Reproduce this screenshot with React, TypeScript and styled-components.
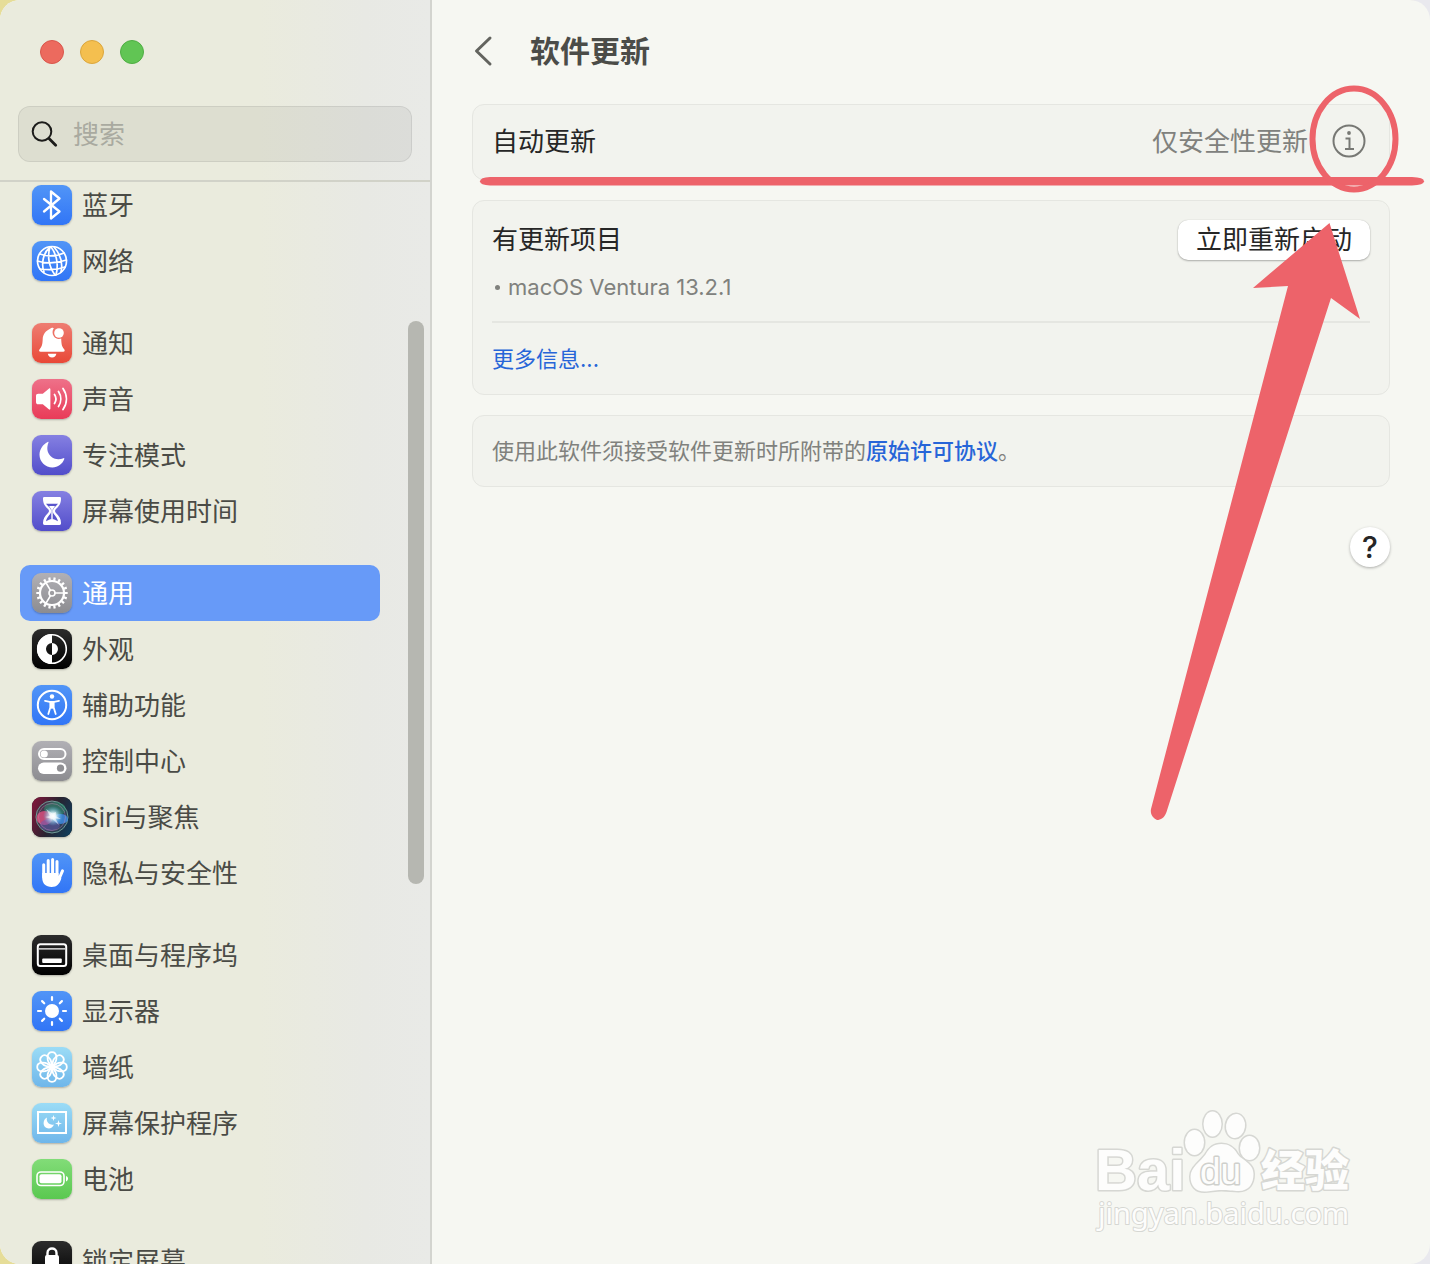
import React from "react";
import styled, { createGlobalStyle } from "styled-components";

const GlobalStyle = createGlobalStyle`
  *, *::before, *::after { box-sizing: border-box; }
  body {
    margin: 0;
    background: linear-gradient(90deg, #e6dd98 0%, #d2cc8d 97%, #e9e9ee 99%);
    color: #262626;
    font-family: Inter, "Noto Sans CJK SC", sans-serif;
    font-size: 26px;
    line-height: 40px;
  }
  button, input { font: inherit; color: inherit; }
  h1, h2, p, ul { margin: 0; padding: 0; font-weight: 400; }
  ul { list-style: none; }
`;

const Window = styled.div`
  position: relative;
  display: flex;
  height: 100vh;
  overflow: hidden;
  border-radius: 20px;
  background: #f6f7f2;
`;

const Sidebar = styled.aside`
  position: relative;
  flex: none;
  display: flex;
  flex-direction: column;
  width: 432px;
  border-right: 2px solid #d3d4cf;
  background: linear-gradient(90deg, #eaebdd 0%, #eaebdd 60%, #e8e9e4 85%, #e9eae7 100%);
`;

const SidebarHeader = styled.header`
  flex: none;
  display: flex;
  flex-direction: column;
  gap: 42px;
  padding: 40px 18px 18px;
  border-bottom: 2px solid #d1d2c8;
`;

const TrafficLights = styled.div`
  display: flex;
  gap: 16px;
  padding-left: 22px;
`;

const Light = styled.button<{ $fill: string; $edge: string }>`
  width: 24px;
  height: 24px;
  padding: 0;
  border: 1px solid ${(p) => p.$edge};
  border-radius: 50%;
  background: ${(p) => p.$fill};
`;

const SearchField = styled.label`
  display: flex;
  align-items: center;
  gap: 14px;
  height: 56px;
  padding: 0 12px;
  border: 1px solid rgba(0, 0, 0, 0.07);
  border-radius: 12px;
  background: rgba(0, 0, 0, 0.055);
`;

const SearchInput = styled.input`
  flex: 1;
  min-width: 0;
  padding: 2px 0 0;
  border: 0;
  outline: 0;
  background: transparent;
  &::placeholder { color: #a9aaa0; opacity: 1; }
`;

const SidebarList = styled.nav`
  flex: 1;
  min-height: 0;
  overflow: hidden;
  display: flex;
  flex-direction: column;
  gap: 26px;
  margin-top: -5px;
  padding: 0 50px 0 20px;
`;

const SidebarLink = styled.a<{ $selected: boolean }>`
  display: flex;
  align-items: center;
  gap: 10px;
  height: 56px;
  padding: 0 12px;
  border-radius: 10px;
  color: ${(p) => (p.$selected ? "#ffffff" : "#4a4b46")};
  background: ${(p) => (p.$selected ? "#679af8" : "transparent")};
  text-decoration: none;
  white-space: nowrap;
`;

const SidebarLabel = styled.span`
  padding-top: 2px;
`;

const IconTile = styled.span<{ $from: string; $to: string }>`
  flex: none;
  width: 40px;
  height: 40px;
  border-radius: 9px;
  overflow: hidden;
  background: linear-gradient(${(p) => p.$from}, ${(p) => p.$to});
  box-shadow: 0 1px 2px rgba(0, 0, 0, 0.25);
  svg { display: block; }
`;

const ScrollThumb = styled.div`
  position: absolute;
  top: 321px;
  right: 6px;
  width: 16px;
  height: 563px;
  border-radius: 8px;
  background: #b6b7b1;
`;

const Main = styled.main`
  flex: 1;
  min-width: 0;
  display: flex;
  flex-direction: column;
  gap: 20px;
  padding: 24px 40px 40px;
`;

const TitleBar = styled.header`
  display: flex;
  align-items: center;
  gap: 36px;
  height: 60px;
  padding-bottom: 6px;
  color: #4b4c48;
`;

const BackButton = styled.button`
  display: flex;
  padding: 0;
  border: 0;
  background: none;
`;

const Title = styled.h1`
  font-size: 30px;
  font-weight: 700;
`;

const Card = styled.section`
  padding: 0 19px;
  border: 1px solid #e5e6e1;
  border-radius: 12px;
  background: #f2f3ee;
`;

const CardRow = styled.div<{ $height: number }>`
  display: flex;
  align-items: center;
  justify-content: space-between;
  height: ${(p) => p.$height}px;
`;

const RowTitle = styled.h2`
  font-size: 26px;
`;

const RowValue = styled.div`
  display: flex;
  align-items: center;
  gap: 24px;
  padding-right: 4px;
  color: #80817d;
`;

const InfoButton = styled.button`
  display: flex;
  padding: 0 0 2px;
  border: 0;
  background: none;
`;

const UpdateSummary = styled.div`
  padding: 19px 0;
  border-bottom: 2px solid #e5e6e1;
`;

const RestartButton = styled.button`
  height: 40px;
  padding: 0 18px;
  border: 0;
  border-radius: 10px;
  background: #ffffff;
  line-height: 38px;
  box-shadow: 0 1px 2px rgba(0, 0, 0, 0.28), 0 0 1px rgba(0, 0, 0, 0.2);
`;

const UpdateItem = styled.li`
  display: flex;
  align-items: center;
  gap: 8px;
  padding: 12px 0 0 3px;
  color: #80817d;
  font-size: 22px;
  line-height: 30px;
  &::before {
    content: "";
    width: 5px;
    height: 5px;
    border-radius: 50%;
    background: currentColor;
  }
`;

const SmallText = styled.p`
  color: #80817d;
  font-size: 22px;
`;

const Link = styled.a<{ $medium?: boolean }>`
  color: #2765d8;
  font-size: 22px;
  font-weight: ${(p) => (p.$medium ? 500 : 400)};
  text-decoration: none;
`;

const HelpButton = styled.button`
  align-self: flex-end;
  width: 40px;
  height: 40px;
  margin-top: 20px;
  padding: 0;
  border: 0;
  border-radius: 50%;
  background: #ffffff;
  font-size: 30px;
  font-weight: 500;
  box-shadow: 0 1px 3px rgba(0, 0, 0, 0.3);
`;

const Markup = styled.svg`
  position: absolute;
  top: 0;
  right: 0;
  pointer-events: none;
`;

const Watermark = styled.svg`
  position: absolute;
  right: 70px;
  bottom: 24px;
  pointer-events: none;
`;

const stroke = { fill: "none", stroke: "#fff", strokeLinecap: "round", strokeLinejoin: "round" } as const;
const angles = (n: number) => Array.from({ length: n }, (_, i) => (i * 360) / n);

const art: Record<string, React.ReactNode> = {
  bluetooth: <path {...stroke} strokeWidth="2.300" d="M12 14l15.500 12.500-8.500 7V6.500l8.500 7L12 26.500" />,
  network: (
    <g {...stroke} strokeWidth="1.700">
      <circle cx="20" cy="20" r="14.500" />
      <path d="M18 6C11 12 9 23 12 31M18 6c-3 9-1 20 5 28M22 6c7 8 9 16 7 25M19 6c5 6 8 17 5 28M8 13c8 3 17 2 24-1M5.500 20c9 3 20 2 29-1M8 28c8 1 17 1 25-2" />
    </g>
  ),
  bell: (
    <g fill="#fff">
      <path d="M18.500 5.500c.6-.8 2-.8 3.300-.2-1.600 2.200-1.700 5.400 0 7.900 1.700 2.500 4.700 3.300 7.400 2.300.2 5.500.6 8 2.800 10.500 1.300 1.500.7 2.800-.8 2.800H8.600c-1.500 0-2.100-1.300-.8-2.800 2.200-2.600 2.700-5 2.900-10 .2-4.600 3-8.300 7.800-10.500z" />
      <path d="M15.800 30.800h8.600c-.4 2.300-2 3.800-4.300 3.800s-3.900-1.500-4.300-3.800z" />
      <circle cx="27" cy="10" r="4.800" />
    </g>
  ),
  sound: (
    <>
      <path fill="#fff" d="M4 17c0-1.500.8-2.300 2.300-2.300h4.500l6-5c.9-.7 1.600-.2 1.600.7v19.200c0 .9-.8 1.400-1.600.7l-6-5H6.300C4.800 25.300 4 24.500 4 23z" />
      <path {...stroke} strokeWidth="1.800" d="M22.500 15.500c1.800 2.700 1.800 6.300 0 9M26.500 12.500c3 4.500 3 10.500 0 15M31 9.500c4.500 6.500 4.500 14.500 0 21" />
    </>
  ),
  moon: <path fill="#fff" d="M16.500 7.500c-2 5-1.500 10 2 13.500 3.500 3.500 8.500 4 13 2.200.7-.3 1 .2.800.9C30.500 29 26 32.500 20.500 32.500 13.300 32.500 7.500 26.800 7.500 19.800c0-5.500 3.500-10.500 8.200-12.800.6-.3 1-.1.800.5z" />,
  hourglass: (
    <>
      <path fill="#fff" d="M12.500 6h15c1.300 0 1.500.7 1.500 1.700 0 5-2 7.300-5 10.300-1.300 1.300-1.300 2.700 0 4 3 3 5 5.500 5 10 0 1.300-.5 2-1.500 2h-15c-1 0-1.500-.7-1.500-2 0-4.500 2-7 5-10 1.300-1.300 1.300-2.700 0-4-3-3-5-5.300-5-10.300C11 6.700 11.200 6 12.500 6z" />
      <path fill="#5954cc" d="M14 12.800h12c-1 2-5 4-5.300 7.200.2 3.500 4.300 5.300 5.300 10.300-2-.8-4-2.300-6-2.300s-4 1.500-6 2.300c1-5 5.100-6.800 5.300-10.300-.3-3.200-4.300-5.200-5.300-7.200z" />
      <path fill="#fff" d="M17 15h6l-2.300 3.500V28h-1.400v-9.500z" />
    </>
  ),
  gear: (
    <g {...stroke}>
      <circle cx="20" cy="20" r="12" strokeWidth="2.200" />
      <circle cx="20" cy="20" r="3" strokeWidth="1.600" />
      <path strokeWidth="1.600" d="M23 20h9M18.500 17.400l-4.700-7.900M18.500 22.600l-4.700 7.900" />
      {angles(18).map((a) => (
        <path key={a} strokeWidth="2.200" strokeLinecap="butt" d="M20 7.500V4.300" transform={`rotate(${a + 10} 20 20)`} />
      ))}
    </g>
  ),
  appearance: (
    <>
      <circle {...stroke} cx="20" cy="20" r="14.300" strokeWidth="1.600" />
      <path fill="#fff" d="M20 5a15 15 0 0 0 0 30v-9a6 6 0 0 1 0-12zM20 14a6 6 0 0 1 0 12z" />
    </>
  ),
  accessibility: (
    <>
      <circle {...stroke} cx="20" cy="20" r="14.200" strokeWidth="2" />
      <circle cx="20" cy="11.500" r="2.200" fill="#fff" />
      <path {...stroke} strokeWidth="1.800" d="M13 15.800l4.800 1h4.400l4.800-1M18.300 17.500v5l-2 6.500M21.700 17.500v5l2 6.500M20 17v6" />
    </>
  ),
  controls: (
    <>
      <rect {...stroke} x="7" y="8" width="26.500" height="10" rx="5" strokeWidth="2" />
      <circle cx="12.200" cy="13" r="3.600" fill="#fff" />
      <rect x="6" y="21.500" width="28.500" height="11.500" rx="5.700" fill="#fff" />
      <circle cx="28.500" cy="27.200" r="3.600" fill="#8f8f93" />
    </>
  ),
  siri: (
    <>
      <defs>
        <linearGradient id="siriBack" x1="0" y1="0.300" x2="1" y2="0.700">
          <stop offset="0" stopColor="#78173a" />
          <stop offset="0.500" stopColor="#29232f" />
          <stop offset="1" stopColor="#113b58" />
        </linearGradient>
        <radialGradient id="siriGlow">
          <stop offset="0" stopColor="#fff" />
          <stop offset="0.300" stopColor="#e6fbff" stopOpacity="0.900" />
          <stop offset="1" stopColor="#4fb8e8" stopOpacity="0" />
        </radialGradient>
      </defs>
      <rect width="40" height="40" fill="url(#siriBack)" />
      <circle cx="20" cy="20" r="16" fill="#3c5266" fillOpacity="0.500" stroke="#6f9c97" strokeWidth="1" />
      <ellipse cx="23" cy="12" rx="11" ry="7" fill="#2f9c78" opacity="0.500" />
      <ellipse cx="12.500" cy="21" rx="8" ry="7" fill="#e0507f" opacity="0.800" />
      <ellipse cx="28.500" cy="22" rx="7.500" ry="5" fill="#3f8be0" opacity="0.850" />
      <ellipse cx="18" cy="28" rx="10" ry="6" fill="#6a5cb8" opacity="0.500" />
      <circle cx="21" cy="19" r="10" fill="url(#siriGlow)" />
      <path fill="#fff" d="M14 12l6.500 4.500L24 15l-.5 4 5.500 3-5.500-.5L27 28l-6.500-6L13 20l5-1z" opacity="0.550" />
      <circle cx="20" cy="20" r="13.500" fill="none" stroke="#d08cba" strokeOpacity="0.500" strokeWidth="0.800" />
    </>
  ),
  hand: (
    <>
      <path {...stroke} strokeWidth="3" d="M11.700 11.800V24M16.200 7.500V22M20.600 6.500V22M25 8.500V24M30.500 17.800L27 26" />
      <path fill="#fff" d="M10.200 20h16.300v3.500l1.800-2 1 4C27.500 31 25 34 19.700 34c-6 0-9.500-3.500-9.500-9.500z" />
    </>
  ),
  dock: (
    <>
      <rect {...stroke} x="5.800" y="9.300" width="28.400" height="21.800" rx="2.500" strokeWidth="2" />
      <path stroke="#fff" strokeWidth="1.300" d="M7 13.800h26" />
      <rect x="10.200" y="23.500" width="19.600" height="4.400" rx="1" fill="#fff" />
    </>
  ),
  sun: (
    <>
      <circle cx="20" cy="20" r="7" fill="#fff" />
      {angles(8).map((a) => (
        <path key={a} {...stroke} strokeWidth="2.200" d="M20 9V6" transform={`rotate(${a} 20 20)`} />
      ))}
    </>
  ),
  flower: (
    <g {...stroke} strokeWidth="1.800">
      {angles(8).map((a) => (
        <path key={a} d="M20 20.500l-3.500-5.500c-1-1.700-1-3.500-.9-5C15.800 7 17.500 5.200 20 5.200S24.200 7 24.400 10c.1 1.500.1 3.300-.9 5z" transform={`rotate(${a} 20 20)`} />
      ))}
    </g>
  ),
  screensaver: (
    <>
      <rect {...stroke} strokeLinejoin="miter" x="6" y="9" width="28" height="21" strokeWidth="2" />
      <path fill="#fff" d="M15 14.500c-1.200 4.500 2.500 8 7 7-1.200 2.600-3 4-5.200 4-3 0-5.200-2.300-5.200-5.200 0-2.500 1.200-4.700 3.400-5.800zM21.500 12l.7 2.300 2.300.7-2.300.7-.7 2.300-.7-2.300-2.300-.7 2.300-.7zM26.500 17l.8 2.700 2.700.8-2.700.8-.8 2.700-.8-2.700-2.700-.8 2.700-.8z" />
    </>
  ),
  battery: (
    <>
      <rect {...stroke} x="5" y="13" width="27" height="13.500" rx="4" strokeWidth="1.600" />
      <rect x="7.500" y="15.300" width="22" height="9" rx="2" fill="#fff" />
      <path fill="#fff" d="M34 17c2.700.8 2.700 4.600 0 5.500z" />
    </>
  ),
  lock: (
    <>
      <path {...stroke} strokeWidth="2.400" d="M15.500 16v-4c0-6 9-6 9 0v4" />
      <rect x="13" y="14" width="14" height="14" rx="2" fill="#fff" />
    </>
  ),
};

const blue = ["#5195f7", "#3175f6"];
const violet = ["#8580e2", "#524dca"];
const black = ["#2c2c2c", "#000000"];
const grey = ["#b1b0b5", "#8c8c90"];
const sky = ["#9bdcf6", "#6fb6ea"];

type Item = { label: string; icon: string; tile: string[]; selected?: boolean };

const groups: Item[][] = [
  [
    { label: "蓝牙", icon: "bluetooth", tile: blue },
    { label: "网络", icon: "network", tile: blue },
  ],
  [
    { label: "通知", icon: "bell", tile: ["#ee7d72", "#e94837"] },
    { label: "声音", icon: "sound", tile: ["#ee7189", "#e93b58"] },
    { label: "专注模式", icon: "moon", tile: violet },
    { label: "屏幕使用时间", icon: "hourglass", tile: violet },
  ],
  [
    { label: "通用", icon: "gear", tile: grey, selected: true },
    { label: "外观", icon: "appearance", tile: black },
    { label: "辅助功能", icon: "accessibility", tile: blue },
    { label: "控制中心", icon: "controls", tile: grey },
    { label: "Siri与聚焦", icon: "siri", tile: black },
    { label: "隐私与安全性", icon: "hand", tile: blue },
  ],
  [
    { label: "桌面与程序坞", icon: "dock", tile: black },
    { label: "显示器", icon: "sun", tile: blue },
    { label: "墙纸", icon: "flower", tile: sky },
    { label: "屏幕保护程序", icon: "screensaver", tile: sky },
    { label: "电池", icon: "battery", tile: ["#82dc78", "#5ac850"] },
  ],
  [{ label: "锁定屏幕", icon: "lock", tile: black }],
];

function SidebarItem({ label, icon, tile, selected = false }: Item) {
  return (
    <li>
      <SidebarLink href="#" $selected={selected} aria-current={selected ? "page" : undefined}>
        <IconTile $from={tile[0]} $to={tile[1]}>
          <svg width="40" height="40" viewBox="0 0 40 40" aria-hidden="true">{art[icon]}</svg>
        </IconTile>
        <SidebarLabel>{label}</SidebarLabel>
      </SidebarLink>
    </li>
  );
}

function RedMarkup() {
  return (
    <Markup width="960" height="830" viewBox="470 0 960 830" aria-hidden="true">
      <g fill="#ed636a">
        <path d="M490 177H1412Q1424 177.500 1424 181.300T1412 185.500H490Q480 185 480 181.300T490 177z" />
        <path d="M1329.500 223L1360 319l-29-21-164.500 514c-2 6-6 8-9.500 8-4-2-7-6-6-11l137-523-35 2z" />
      </g>
      <ellipse cx="1354" cy="139" rx="41.500" ry="50.500" fill="none" stroke="#ed636a" strokeWidth="6" />
    </Markup>
  );
}

function BaiduWatermark() {
  return (
    <Watermark width="270" height="136" viewBox="1090 1104 270 136">
      <g fill="#fdfdfc" stroke="#d6d7d3" strokeWidth="3" paintOrder="stroke" strokeLinejoin="round">
        <text x="1095" y="1190" fontFamily="Liberation Sans, sans-serif" fontWeight="700" fontSize="58">Bai</text>
        <text x="1261" y="1187" fontFamily="Noto Sans CJK SC, sans-serif" fontWeight="900" fontSize="44">经验</text>
        <text x="1098" y="1224" fontFamily="Noto Sans, sans-serif" fontSize="29" strokeWidth="2">jingyan.baidu.com</text>
        <ellipse cx="1194.500" cy="1142.500" rx="9.500" ry="12.500" />
        <ellipse cx="1212.500" cy="1124" rx="9" ry="12.500" />
        <ellipse cx="1235.500" cy="1126" rx="9.500" ry="12" transform="rotate(8 1235.500 1126)" />
        <ellipse cx="1249.500" cy="1148" rx="9.500" ry="12" />
        <path d="M1221.500 1144c7 0 12 3 16 10 4 6 16 9 16 20 0 9-4 17-15 17-6 0-10-1-17-1s-11 1.500-17 1.500c-9 0-14-6-14-15 0-9 10-15 15-22 4-7 8-10.500 16-10.500z" />
        <text x="1200" y="1184" fontFamily="Liberation Sans, sans-serif" fontSize="37" strokeWidth="3" stroke="#cfd0cc">du</text>
      </g>
    </Watermark>
  );
}

export default function App() {
  return (
    <>
      <GlobalStyle />
      <Window>
        <Sidebar>
          <SidebarHeader>
            <TrafficLights>
              <Light $fill="#ec6a5e" $edge="#d9564b" aria-label="关闭" />
              <Light $fill="#f4bf4f" $edge="#dba63c" aria-label="最小化" />
              <Light $fill="#61c554" $edge="#4fae43" aria-label="缩放" />
            </TrafficLights>
            <SearchField>
              <svg width="28" height="28" viewBox="0 0 28 28" fill="none" stroke="#1c1c1a" strokeLinecap="round" aria-hidden="true">
                <circle cx="11" cy="11.500" r="9.300" strokeWidth="2" />
                <path strokeWidth="2.800" d="M18 18.500l6.700 6.700" />
              </svg>
              <SearchInput type="search" placeholder="搜索" aria-label="搜索" />
            </SearchField>
          </SidebarHeader>
          <SidebarList>
            {groups.map((items) => (
              <ul key={items[0].label}>
                {items.map((item) => (
                  <SidebarItem key={item.label} {...item} />
                ))}
              </ul>
            ))}
          </SidebarList>
          <ScrollThumb />
        </Sidebar>

        <Main>
          <TitleBar>
            <BackButton aria-label="返回">
              <svg width="22" height="32" viewBox="0 0 22 32" fill="none" stroke="#63645f" strokeWidth="3" strokeLinecap="round" strokeLinejoin="round">
                <path d="M18 3L4.500 16 18 29" />
              </svg>
            </BackButton>
            <Title>软件更新</Title>
          </TitleBar>

          <Card>
            <CardRow $height={74}>
              <RowTitle>自动更新</RowTitle>
              <RowValue>
                仅安全性更新
                <InfoButton aria-label="详细信息">
                  <svg width="34" height="34" viewBox="0 0 34 34" fill="none" stroke="#777874" strokeWidth="2">
                    <circle cx="17" cy="17" r="15.500" />
                    <path d="M13.500 14.500h4v10.500M13 25h9" />
                    <circle cx="17" cy="9" r="1.900" fill="#777874" stroke="none" />
                  </svg>
                </InfoButton>
              </RowValue>
            </CardRow>
          </Card>

          <Card>
            <UpdateSummary>
              <CardRow $height={40}>
                <RowTitle>有更新项目</RowTitle>
                <RestartButton>立即重新启动</RestartButton>
              </CardRow>
              <ul>
                <UpdateItem>macOS Ventura 13.2.1</UpdateItem>
              </ul>
            </UpdateSummary>
            <CardRow $height={71}>
              <Link href="#">更多信息...</Link>
            </CardRow>
          </Card>

          <Card>
            <CardRow $height={70}>
              <SmallText>
                使用此软件须接受软件更新时所附带的<Link href="#" $medium>原始许可协议</Link>。
              </SmallText>
            </CardRow>
          </Card>

          <HelpButton aria-label="帮助">?</HelpButton>
        </Main>

        <RedMarkup />
        <BaiduWatermark />
      </Window>
    </>
  );
}
